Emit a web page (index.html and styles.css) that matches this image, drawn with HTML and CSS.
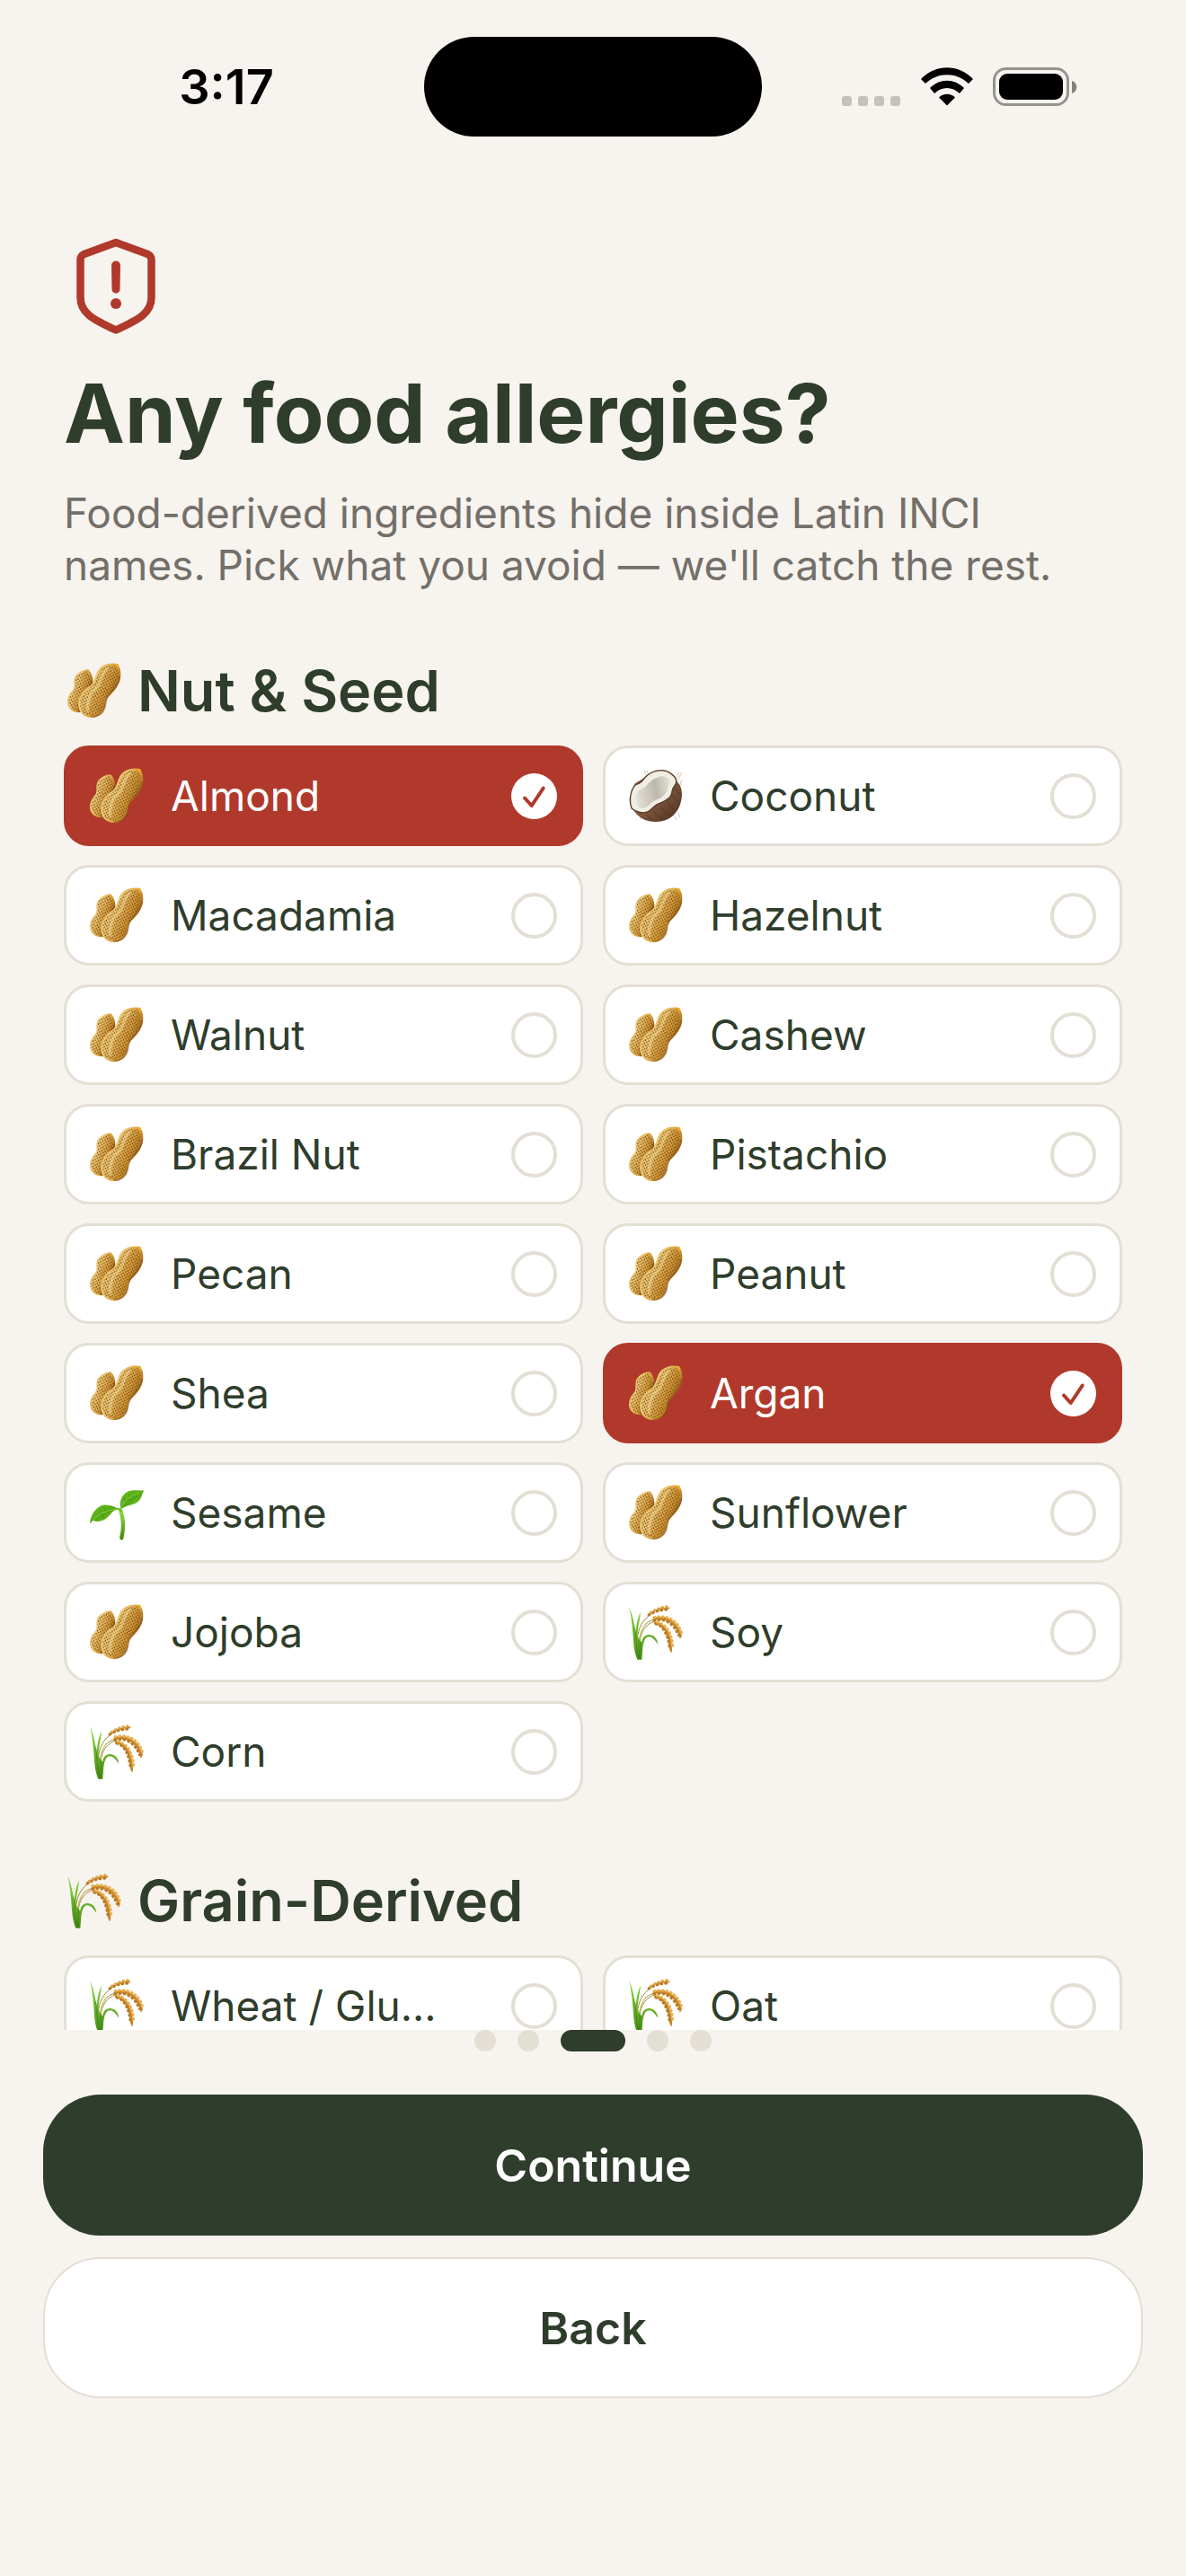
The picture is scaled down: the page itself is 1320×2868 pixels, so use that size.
FILE: index.html
```html
<!DOCTYPE html>
<html lang="en">
<head>
    <meta charset="UTF-8">
    <meta name="viewport" content="width=device-width, initial-scale=1.0">
    <title>Food allergies</title>
    <link rel="stylesheet" href="styles.css">
</head>
<body>
    <!-- Shared icons -->
    <svg class="sprite" aria-hidden="true">
        <defs>
            <linearGradient id="shell" x1="0" y1="0" x2="1" y2="0.6">
                <stop offset="0" stop-color="#c99845"/>
                <stop offset="0.4" stop-color="#efcb78"/>
                <stop offset="0.7" stop-color="#d39a38"/>
                <stop offset="1" stop-color="#8a5213"/>
            </linearGradient>
            <pattern id="dimples" width="12" height="12" patternUnits="userSpaceOnUse" patternTransform="rotate(18)">
                <path d="M3 1v6M9 7v5" stroke="#6b3c0c" stroke-width="3"/>
            </pattern>
            <linearGradient id="husk" x1="0" y1="0" x2="1" y2="1">
                <stop offset="0.4" stop-color="#8a6146"/>
                <stop offset="1" stop-color="#4a2f1e"/>
            </linearGradient>
            <linearGradient id="hollow" x1="0" y1="0.6" x2="1" y2="0.4">
                <stop offset="0" stop-color="#e2dfd6"/>
                <stop offset="0.6" stop-color="#bdb8ab"/>
                <stop offset="1" stop-color="#dedace"/>
            </linearGradient>
            <linearGradient id="leaf" x1="0" y1="0" x2="1" y2="1">
                <stop offset="0" stop-color="#6cc41f"/>
                <stop offset="0.5" stop-color="#55a816"/>
                <stop offset="1" stop-color="#84dd28"/>
            </linearGradient>
            <linearGradient id="stalk" x1="0" y1="0" x2="0" y2="1">
                <stop offset="0" stop-color="#8edc45"/>
                <stop offset="1" stop-color="#478a12"/>
            </linearGradient>
        </defs>
        <symbol id="peanut" viewBox="0 0 180 186">
            <path fill="url(#shell)" d="M70 22C50 23 28 34 23 54c-3 14 3 24-5 36C8 102 0 112 0 132c0 20 18 34 38 34 24 0 30-28 26-46-2-14 16-24 20-46 3-18 0-38-14-52z"/>
            <path fill="url(#dimples)" d="M66 27C50 28 32 38 27 56c-3 14 3 24-5 36C12 104 4 114 4 132c0 16 16 29 34 29 20 0 25-25 22-41-2-14 16-24 20-46 3-18-2-37-14-47z"/>
            <path fill="#5f350c" opacity="0.55" d="M84 46c-2 20-10 32-24 46-18 16-32 42-22 74 10-4 20-30 26-46 4-16 16-24 20-46z"/>
            <path fill="url(#shell)" d="M168 3C140-3 112 6 100 28c-9 18-10 38-26 50-22 14-38 34-38 60 0 26 18 45 44 45 28 0 46-22 48-48 1-18 16-26 30-44 12-16 20-32 20-52 0-12-2-24-8-30 0-4-1-5-2-6z"/>
            <path fill="url(#dimples)" d="M158 10c-22-4-42 4-52 22-9 18-12 36-28 48-20 14-36 34-36 58 0 23 15 38 38 38 24 0 40-18 42-42 1-18 16-26 30-44 12-16 18-32 18-50 0-12-4-22-12-30z"/>
            <path fill="none" stroke="#fbe3a0" stroke-width="10" opacity="0.45" stroke-linecap="round" d="M134 18c-26 18-18 54-42 70-16 14-28 42-24 72"/>
            <path fill="none" stroke="#70400f" stroke-width="6" opacity="0.4" d="M174 44c0 28-22 48-38 66-10 12-6 26-12 42-6 18-24 28-44 28"/>
            <path fill="#f3a91c" d="M158 3c8-2 14 2 14 14-6-2-10-6-14-14z"/>
        </symbol>
        <symbol id="coconut" viewBox="0 0 180 186">
            <path fill="none" stroke="#a98563" stroke-width="1.5" d="M56 24 52 8M64 20l-4-12M152 44l16-30M158 50l18-34M170 60l6-20M164 146l6 20M148 158l12 16M40 158l-2 14"/>
            <path fill="url(#husk)" d="M2 102C4 134 26 162 54 174c30 10 70 8 94-16 18-16 28-40 29-70 0-18-6-32-16-42L130 14 90 8 50 34 20 52z"/>
            <path fill="none" stroke="#2f1c10" stroke-width="2" opacity="0.5" d="M60 156c6 10 14 16 24 18M84 146c8 10 16 18 26 24M108 132c8 10 16 20 26 26M128 116c8 10 16 20 24 26M146 92c8 12 14 20 22 22M152 70c8 10 12 16 20 18"/>
            <path fill="#efeee4" stroke="#5a3a22" stroke-width="4" d="M22 56c8-2 14-4 20-10C54 28 66 16 90 10c18-4 36-2 46 6 10 6 20 16 22 26 2 12-4 16-10 24-6 10-2 20-12 32-14 14-28 18-42 24-12 6-18 16-30 24-16 8-40 2-54-10C2 120 0 78 22 56z"/>
            <path fill="url(#hollow)" d="M32 76c8-6 18-8 26-16C68 46 82 34 102 29c16-3 28 2 32 10 4 10-4 20-6 32-4 16-12 24-28 32-16 6-24 12-34 22-12 10-28 14-36 4-7-12-8-40 2-53z"/>
        </symbol>
        <symbol id="sprout" viewBox="0 0 180 186">
            <path fill="none" stroke="url(#stalk)" stroke-width="13" stroke-linecap="round" d="M103 88c9 24 11 54 3 90"/>
            <path fill="none" stroke="#6ac022" stroke-width="6" d="M84 82c10-4 18 0 22 8"/>
            <path fill="url(#leaf)" d="M0 130c2-22 12-46 34-58 22-10 46 0 64 10-20 2-26 14-38 26-14 14-34 18-48 12-5 2-8 6-12 10z"/>
            <path fill="url(#leaf)" d="M103 82c-6-26 4-50 26-60 18-7 36 0 53-4-8 8-6 26-20 38-18 14-42 12-59 26z"/>
            <path fill="none" stroke="#a0e058" stroke-width="2" d="M10 120c16-22 48-38 86-38M104 78c8-26 32-40 62-52"/>
            <path fill="none" stroke="#2f7a0a" stroke-width="2" opacity="0.5" d="M34 100l-2-20M52 90l-6-18M44 96l2 18M62 87l6 14M116 56l-2-18M132 42l0-16M124 48l20 4M140 38l18 2"/>
        </symbol>
        <symbol id="rice" viewBox="0 0 180 186">
            <path fill="none" stroke="#a08a35" stroke-width="3" d="M28 120c2-40 18-70 46-86M34 124c4-40 22-70 54-72M36 130c2-38 20-64 52-74"/>
            <path fill="none" stroke="#c7d36a" stroke-width="3" d="M34 140c0-30 6-54 22-76"/>
            <path fill="url(#stalk)" d="M1 10c10 22 16 52 22 84 2-24 6-50 16-68-2 28-10 50-10 78 4 14 8 20 14 22 2-16 12-24 26-24 16 2 26 14 28 32-10-14-20-26-30-25-14 1-18 17-21 36l-3 40H28C14 150 16 120 12 86 10 60 6 34 1 10z"/>
            <path fill="none" stroke="#2f7410" stroke-width="3" opacity="0.5" d="M20 80c4 40 6 74 14 102M36 120c2 20 0 40-2 60"/>
            <!-- grain heads: a core with two rows of kernels along it -->
            <g fill="none" stroke-linecap="round">
                <path stroke="#c8862a" stroke-width="5" d="M66 34C86 20 108 12 134 13"/>
                <path stroke="#b87a22" stroke-width="9" stroke-dasharray="3 12" d="M66 36C86 24 108 18 136 18"/>
                <path stroke="#e0a441" stroke-width="8" stroke-dasharray="3 11" d="M72 28C90 16 108 10 128 8"/>
                <path stroke="#c8862a" stroke-width="9" d="M84 49c38-9 74 8 88 56"/>
                <path stroke="#b87a22" stroke-width="9" stroke-dasharray="3 12" d="M84 54c36-8 66 10 82 50"/>
                <path stroke="#e8b04c" stroke-width="9" stroke-dasharray="3 11" d="M84 44c42-9 80 8 92 54"/>
                <path stroke="#c8862a" stroke-width="9" d="M88 62c32 4 50 40 52 90"/>
                <path stroke="#b87a22" stroke-width="9" stroke-dasharray="3 12" d="M90 66c26 6 42 40 46 84"/>
                <path stroke="#e8b04c" stroke-width="9" stroke-dasharray="3 11" d="M94 60c34 8 50 42 52 82"/>
                <path stroke="#c8862a" stroke-width="5" d="M140 150l1 9M173 104l-2 8"/>
            </g>
        </symbol>
    </svg>

    <header class="status-bar">
        <span class="time">3:17</span>
        <div class="island"></div>
        <div class="indicators">
            <svg width="66" height="44" viewBox="0 0 66 44" fill="#c5c1bb" aria-hidden="true">
                <rect x="0" y="32" width="11" height="11" rx="3"/>
                <rect x="18" y="32" width="11" height="11" rx="3"/>
                <rect x="36" y="32" width="11" height="11" rx="3"/>
                <rect x="54" y="32" width="11" height="11" rx="3"/>
            </svg>
            <svg width="58" height="44" viewBox="0 0 58 44" aria-hidden="true">
                <path d="M0 13C16-4 42-4 58 13l-5 5C39 5 19 5 5 18z"/>
                <path d="M10 23c11-11 27-11 38 0l-5 6c-8-8-20-8-28 0z"/>
                <path d="M20 33.500c5-5 13-5 18 0L29 42.500z"/>
            </svg>
            <svg width="94" height="44" viewBox="0 0 94 44" aria-hidden="true">
                <rect x="1.500" y="1.500" width="82" height="40" rx="13" fill="none" stroke="#96938e" stroke-width="3"/>
                <rect x="7" y="7" width="71" height="29" rx="9"/>
                <path d="M88 15c7 2 7 12 0 14z" fill="#84827e"/>
            </svg>
        </div>
    </header>

    <main class="content">
        <div class="intro">
            <svg class="shield" viewBox="0 0 90 108" fill="none" stroke="#b0392b" stroke-width="8.500" stroke-linejoin="round" aria-hidden="true">
                <path d="M45 5 9.500 18Q5.500 20 5.500 24V66C5.500 83 18 90 45 102.500C72 90 84.500 83 84.500 66V24Q84.500 20 80.500 18z"/>
                <path d="M42 30.500a3 3 0 0 1 6 0L47.500 57a2.500 2.500 0 0 1-5 0z" fill="#b0392b" stroke-width="4"/>
                <circle cx="45" cy="73" r="6" fill="#b0392b" stroke="none"/>
            </svg>
            <h1>Any food allergies?</h1>
            <p>Food-derived ingredients hide inside Latin INCI names. Pick what you avoid — we'll catch the rest.</p>
        </div>

        <section>
            <h2><svg class="emoji" aria-hidden="true"><use href="#peanut"/></svg>Nut &amp; Seed</h2>
            <div class="options">
                <label class="option"><svg class="emoji" aria-hidden="true"><use href="#peanut"/></svg><span>Almond</span><input type="checkbox" checked></label>
                <label class="option"><svg class="emoji" aria-hidden="true"><use href="#coconut"/></svg><span>Coconut</span><input type="checkbox"></label>
                <label class="option"><svg class="emoji" aria-hidden="true"><use href="#peanut"/></svg><span>Macadamia</span><input type="checkbox"></label>
                <label class="option"><svg class="emoji" aria-hidden="true"><use href="#peanut"/></svg><span>Hazelnut</span><input type="checkbox"></label>
                <label class="option"><svg class="emoji" aria-hidden="true"><use href="#peanut"/></svg><span>Walnut</span><input type="checkbox"></label>
                <label class="option"><svg class="emoji" aria-hidden="true"><use href="#peanut"/></svg><span>Cashew</span><input type="checkbox"></label>
                <label class="option"><svg class="emoji" aria-hidden="true"><use href="#peanut"/></svg><span>Brazil Nut</span><input type="checkbox"></label>
                <label class="option"><svg class="emoji" aria-hidden="true"><use href="#peanut"/></svg><span>Pistachio</span><input type="checkbox"></label>
                <label class="option"><svg class="emoji" aria-hidden="true"><use href="#peanut"/></svg><span>Pecan</span><input type="checkbox"></label>
                <label class="option"><svg class="emoji" aria-hidden="true"><use href="#peanut"/></svg><span>Peanut</span><input type="checkbox"></label>
                <label class="option"><svg class="emoji" aria-hidden="true"><use href="#peanut"/></svg><span>Shea</span><input type="checkbox"></label>
                <label class="option"><svg class="emoji" aria-hidden="true"><use href="#peanut"/></svg><span>Argan</span><input type="checkbox" checked></label>
                <label class="option"><svg class="emoji" aria-hidden="true"><use href="#sprout"/></svg><span>Sesame</span><input type="checkbox"></label>
                <label class="option"><svg class="emoji" aria-hidden="true"><use href="#peanut"/></svg><span>Sunflower</span><input type="checkbox"></label>
                <label class="option"><svg class="emoji" aria-hidden="true"><use href="#peanut"/></svg><span>Jojoba</span><input type="checkbox"></label>
                <label class="option"><svg class="emoji" aria-hidden="true"><use href="#rice"/></svg><span>Soy</span><input type="checkbox"></label>
                <label class="option"><svg class="emoji" aria-hidden="true"><use href="#rice"/></svg><span>Corn</span><input type="checkbox"></label>
            </div>
        </section>

        <section>
            <h2><svg class="emoji" aria-hidden="true"><use href="#rice"/></svg>Grain-Derived</h2>
            <div class="options">
                <label class="option"><svg class="emoji" aria-hidden="true"><use href="#rice"/></svg><span>Wheat / Glu…</span><input type="checkbox"></label>
                <label class="option"><svg class="emoji" aria-hidden="true"><use href="#rice"/></svg><span>Oat</span><input type="checkbox"></label>
            </div>
        </section>
    </main>

    <footer class="footer">
        <div class="dots">
            <i></i><i></i><i class="active"></i><i></i><i></i>
        </div>
        <button type="button" class="primary">Continue</button>
        <button type="button" class="secondary">Back</button>
    </footer>
</body>
</html>
```

FILE: styles.css
```css
* {
    box-sizing: border-box;
}

body {
    margin: 0;
    height: 100vh;
    display: flex;
    flex-direction: column;
    background-color: #f7f3ee;
    color: #2f3d2c;
    font-family: Inter, "Liberation Sans", sans-serif;
}

.sprite {
    position: absolute;
    width: 0;
    height: 0;
}

/* Status bar */
.status-bar {
    display: grid;
    grid-template-columns: 1fr 376px 1fr;
    align-items: center;
    padding-top: 41px;
    color: #000;
}

.time {
    padding-left: 32px;
    text-align: center;
    font-size: 54px;
    line-height: 64px;
    font-weight: 600;
}

.island {
    height: 111px;
    border-radius: 56px;
    background-color: #000;
}

.indicators {
    display: flex;
    justify-content: center;
    gap: 22px;
    padding-right: 32px;
}

/* Scrolling content */
.content {
    flex: 1;
    min-height: 0;
    overflow-y: auto;
    scrollbar-width: none;
    display: flex;
    flex-direction: column;
    gap: 70px;
    padding: 113px 71px 0;
}

.shield {
    display: block;
    width: 90px;
    height: 108px;
    margin-left: 13px;
}

h1 {
    margin: 31px 0 26px;
    font-size: 91px;
    line-height: 112px;
    font-weight: 700;
}

.intro p {
    margin: 0 0 1px;
    font-size: 46px;
    line-height: 58px;
    color: #736f69;
}

h2 {
    display: flex;
    align-items: center;
    gap: 18px;
    margin: 0 0 21px;
    padding-left: 4px;
    font-size: 63px;
    line-height: 80px;
    font-weight: 600;
}

.emoji {
    flex: none;
    width: 60px;
    height: 62px;
}

.options {
    display: grid;
    grid-template-columns: 1fr 1fr;
    gap: 21px 22px;
}

.option {
    display: flex;
    align-items: center;
    gap: 30px;
    height: 112px;
    padding: 0 26px;
    border: 3px solid #e3dfd5;
    border-radius: 28px;
    background-color: #fff;
    font-size: 46px;
    cursor: pointer;
}

.option span {
    flex: 1;
    white-space: nowrap;
}

.option input {
    appearance: none;
    flex: none;
    width: 51px;
    height: 51px;
    margin: 0;
    border: 4px solid #e3dfd5;
    border-radius: 50%;
    cursor: pointer;
}

.option:has(input:checked) {
    background-color: #b0392b;
    border-color: #b0392b;
    color: #fff;
}

.option input:checked {
    border: none;
    background: #fff url("data:image/svg+xml,%3Csvg xmlns='http://www.w3.org/2000/svg' viewBox='0 0 51 51'%3E%3Cpath d='M15 27.500 22.700 36 35.700 16.500' fill='none' stroke='%23b0392b' stroke-width='4' stroke-linecap='round' stroke-linejoin='round'/%3E%3C/svg%3E");
}

/* Footer */
.footer {
    display: flex;
    flex-direction: column;
    gap: 24px;
    padding: 0 48px 198px;
}

.dots {
    display: flex;
    justify-content: center;
    gap: 24px;
    margin-bottom: 24px;
}

.dots i {
    width: 24px;
    height: 24px;
    border-radius: 12px;
    background-color: #e3dfd5;
}

.dots .active {
    width: 72px;
    background-color: #2f3d2c;
}

.footer button {
    height: 157px;
    border: none;
    border-radius: 64px;
    font-family: inherit;
    font-size: 50px;
    font-weight: 600;
    cursor: pointer;
}

.footer .primary {
    background-color: #2f3d2c;
    color: #fff;
}

.footer .secondary {
    border: 2px solid #e3dfd5;
    background-color: #fff;
    color: #2f3d2c;
}
```
